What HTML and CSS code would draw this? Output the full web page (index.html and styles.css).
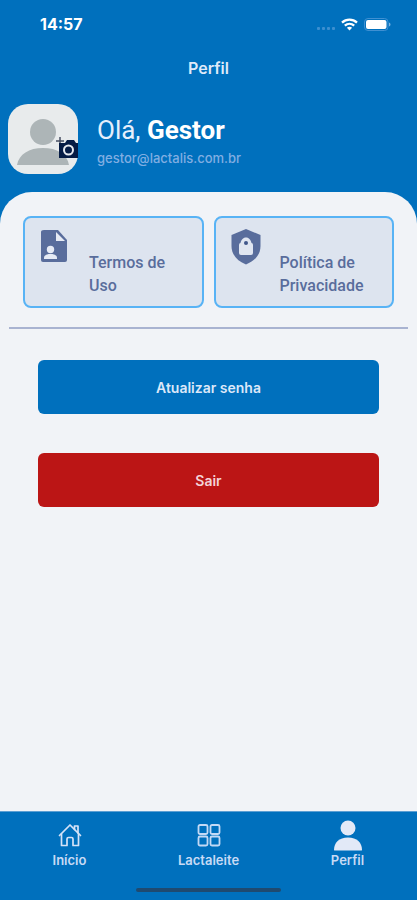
FILE: index.html
```html
<!DOCTYPE html>
<html lang="pt-BR">
<head>
    <meta charset="UTF-8">
    <meta name="viewport" content="width=device-width, initial-scale=1">
    <title>Perfil</title>
    <link rel="stylesheet" href="styles.css">
</head>
<body>
<header class="header">
    <div class="status">
        <span class="time">14:57</span>
        <div class="status-icons">
            <div class="signal"><i></i><i></i><i></i><i></i></div>
            <svg class="wifi" width="17" height="13" viewBox="0 0 17 13" fill="none" stroke="#fff" stroke-width="2.3">
                <path d="M1 4.6C5.3.6 11.7.6 16 4.6"/>
                <path d="M3.8 7.7c2.8-2.5 6.6-2.5 9.4 0"/>
                <path d="M8.5 12.5 5.9 9.8c1.5-1.3 3.7-1.3 5.2 0z" fill="#fff" stroke="none"/>
            </svg>
            <svg class="battery" width="27" height="13" viewBox="0 0 27 13">
                <rect x=".5" y=".5" width="23.5" height="12" rx="3.5" fill="none" stroke="#3f90d2"/>
                <rect x="2" y="2" width="20.5" height="9" rx="2" fill="#fff"/>
                <path d="M25 4.5c2 .8 2 3.2 0 4z" fill="#7db4e3"/>
            </svg>
        </div>
    </div>
    <h1 class="title">Perfil</h1>
    <div class="user">
        <button class="avatar" type="button" aria-label="Alterar foto">
            <svg width="70" height="70" viewBox="0 0 70 70">
                <circle cx="35" cy="28" r="13" fill="#adb5b7"/>
                <path d="M9 61c2-11 12-17 26-17s24 6 26 17z" fill="#adb5b7"/>
                <path d="M52 33v8M48 37h8" stroke="#474f61" stroke-width="1.5"/>
                <path d="M51 39h6l2-3h7l2 3h2v15H51z" fill="#061c45"/>
                <circle cx="60.5" cy="46" r="4.5" fill="#061c45" stroke="#e8ebf0" stroke-width="2"/>
            </svg>
        </button>
        <div class="user-info">
            <p class="hello">Olá, <b>Gestor</b></p>
            <p class="email">gestor@lactalis.com.br</p>
        </div>
    </div>
</header>

<main class="main">
    <div class="cards">
        <a class="card" href="#termos">
            <svg width="30" height="36" viewBox="0 0 30 36">
                <path d="M4 1h14l9 10v20q0 2-2 2H3q-2 0-2-2V3q0-2 3-2z" fill="#596d9c"/>
                <path d="M16 3v9h9z" fill="#e6ebf5"/>
                <circle cx="10.5" cy="20.5" r="3.7" fill="#e6ebf5"/>
                <path d="M4 30v-1c0-3 3-4 6.5-4s6.5 1 6.5 4v1z" fill="#e6ebf5"/>
            </svg>
            <span>Termos de Uso</span>
        </a>
        <a class="card" href="#privacidade">
            <svg width="30" height="36" viewBox="0 0 30 36">
                <path d="M15 0 29.5 6v11c0 9-6 15-14.5 18.5C6.5 32 .5 26 .5 17V6z" fill="#596d9c"/>
                <path d="M9.5 14C10 11 12 8.5 15 8.5s5 2.5 5.5 5.5q1.5 0 1.5 2v8q0 2-2 2H10q-2 0-2-2v-8q0-2 1.5-2z" fill="#e0e6f1"/>
                <circle cx="15" cy="14" r="2" fill="#40578b"/>
            </svg>
            <span>Política de Privacidade</span>
        </a>
    </div>
    <hr class="line">
    <div class="actions">
        <button class="btn" type="button">Atualizar senha</button>
        <button class="btn btn-exit" type="button">Sair</button>
    </div>
</main>

<nav class="nav">
    <div class="tabs">
        <a class="tab" href="#inicio">
            <svg width="32" height="32" viewBox="0 0 32 32" fill="none" stroke="#d5e2f7" stroke-width="1.7" stroke-linejoin="round" stroke-linecap="round">
                <path d="M5.5 15.5 16 5l10.500 10.500"/>
                <path d="M20.5 9.5V6H24v7"/>
                <path d="M7.5 14v11.5H13V19q0-1.5 1.5-1.5h3q1.5 0 1.5 1.5v6.5h5.5V14"/>
            </svg>
            Início
        </a>
        <a class="tab" href="#lactaleite">
            <svg width="32" height="32" viewBox="0 0 32 32" fill="none" stroke="#c3d9f5" stroke-width="1.8">
                <rect x="5.5" y="5" width="9" height="9" rx="1.5"/>
                <rect x="17.5" y="5" width="9" height="9" rx="1.5"/>
                <rect x="5.5" y="16.5" width="9" height="9" rx="1.5"/>
                <rect x="17.5" y="16.5" width="9" height="9" rx="1.5"/>
            </svg>
            Lactaleite
        </a>
        <a class="tab" href="#perfil" aria-current="page">
            <svg width="32" height="32" viewBox="0 0 32 32" fill="#e2e9f7">
                <circle cx="16" cy="8" r="7.5"/>
                <path d="M2 30c0-7.5 5-12.5 14-12.5S30 22.5 30 30q0 .5-1 .5H3q-1 0-1-.5z"/>
            </svg>
            Perfil
        </a>
    </div>
    <div class="home-bar"></div>
</nav>
</body>
</html>
```

FILE: styles.css
```css
* {
    box-sizing: border-box;
}

body {
    display: flex;
    flex-direction: column;
    min-height: 100vh;
    margin: 0;
    background-color: #0070bd;
    font-family: Inter, "Liberation Sans", sans-serif;
}

h1, p {
    margin: 0;
}

a {
    color: inherit;
    text-decoration: none;
}

button {
    border: 0;
    font-family: inherit;
    cursor: pointer;
}

.header {
    padding-bottom: 18px;
    color: #fff;
}

.status {
    display: flex;
    justify-content: space-between;
    align-items: center;
    height: 48px;
    padding: 0 26px 0 40px;
}

.time {
    font-size: 16px;
    font-weight: 700;
}

.status-icons {
    display: flex;
    align-items: center;
    gap: 6px;
}

.signal {
    display: flex;
    gap: 2px;
    padding-top: 8px;
}

.signal i {
    width: 3px;
    height: 3px;
    border-radius: 1px;
    background-color: #3c8fd0;
}

.title {
    height: 56px;
    line-height: 40px;
    text-align: center;
    font-size: 16px;
    font-weight: 600;
    color: #dfeafa;
}

.user {
    display: flex;
    align-items: center;
    gap: 19px;
    padding: 0 8px;
}

.user-info {
    padding-top: 6px;
}

.avatar {
    width: 70px;
    height: 70px;
    padding: 0;
    border-radius: 20px;
    background-color: #e8ebec;
}

.avatar svg {
    display: block;
}

.hello {
    line-height: 32px;
    font-family: Roboto, sans-serif;
    font-size: 26px;
    color: #e6effc;
}

.hello b {
    color: #fff;
}

.email {
    line-height: 24px;
    font-size: 13px;
    font-weight: 500;
    color: #80aee2;
}

.main {
    flex: 1;
    padding-top: 24px;
    border-radius: 32px 32px 0 0;
    background-color: #f1f3f7;
}

.cards {
    display: grid;
    grid-template-columns: 1fr 1fr;
    gap: 10px;
    padding: 0 23px;
}

.card {
    display: flex;
    gap: 19px;
    height: 92px;
    padding: 11px 15px;
    border: 2px solid #58b3f5;
    border-radius: 8px;
    background-color: #dde4ef;
    line-height: 23px;
    font-family: Roboto, sans-serif;
    font-size: 16px;
    font-weight: 500;
    color: #596d9c;
}

.card svg {
    flex: none;
}

.card span {
    padding-top: 22px;
}

.line {
    height: 2px;
    margin: 19px 9px 31px;
    border: 0;
    background-color: #a9b3d1;
}

.actions {
    display: flex;
    flex-direction: column;
    gap: 39px;
    padding: 0 38px;
}

.btn {
    height: 54px;
    border-radius: 6px;
    background-color: #0070bd;
    font-size: 14px;
    font-weight: 600;
    color: #dce8f9;
}

.btn-exit {
    background-color: #bb1515;
    color: #f3d3d8;
}

.nav {
    padding: 8px 0;
    border-top: 1px solid #5c9fd3;
    background-color: #0070bd;
}

.tabs {
    display: grid;
    grid-template-columns: repeat(3, 1fr);
}

.tab {
    display: flex;
    flex-direction: column;
    align-items: center;
    line-height: 16px;
    font-size: 13px;
    font-weight: 600;
    color: #c8dbf5;
}

.home-bar {
    width: 35%;
    height: 4px;
    margin: 20px auto 0;
    border-radius: 2px;
    background-color: #1f4a70;
}
```
